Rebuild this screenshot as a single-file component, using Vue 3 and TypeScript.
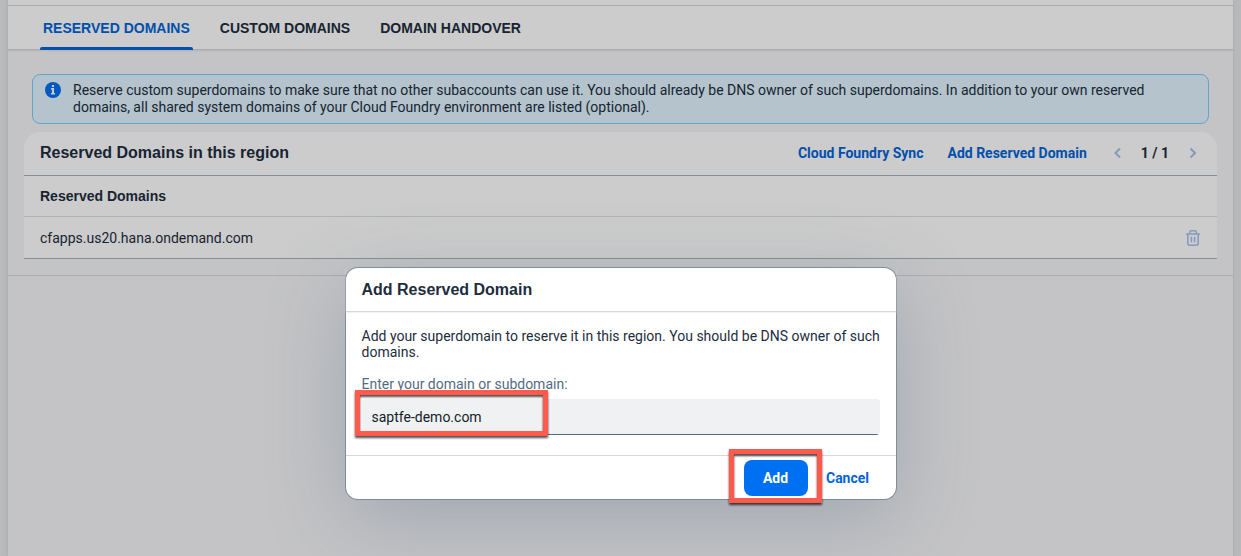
<script setup lang="ts">
import { ref } from 'vue'

interface Tab {
  id: string
  label: string
}

const tabs: Tab[] = [
  { id: 'reserved', label: 'RESERVED DOMAINS' },
  { id: 'custom', label: 'CUSTOM DOMAINS' },
  { id: 'handover', label: 'DOMAIN HANDOVER' },
]
const activeTab = ref('reserved')
const domains = ref<string[]>(['cfapps.us20.hana.ondemand.com'])
const newDomain = ref('saptfe-demo.com')
</script>

<template>
  <div class="shell">
    <div class="page">
      <div class="page-top"></div>
      <nav class="tabs" role="tablist">
        <button
          v-for="tab in tabs"
          :key="tab.id"
          type="button"
          role="tab"
          class="tab"
          :class="{ active: tab.id === activeTab }"
          :aria-selected="tab.id === activeTab"
          @click="activeTab = tab.id"
        >{{ tab.label }}</button>
      </nav>
      <main class="content">
        <div class="message">
          <svg class="info-icon" viewBox="0 0 16 16" width="16" height="16" aria-hidden="true">
            <circle cx="8" cy="8" r="8" fill="#0070f2" />
            <rect x="7" y="3" width="2" height="2" fill="#fff" />
            <path d="M6 6h3v5h1v1.500H6V11h1V7.500H6z" fill="#fff" />
          </svg>
          <p>Reserve custom superdomains to make sure that no other subaccounts can use it. You should already be DNS owner of such superdomains. In addition to your own reserved domains, all shared system domains of your Cloud Foundry environment are listed (optional).</p>
        </div>
        <section class="card">
          <header class="toolbar">
            <h2>Reserved Domains in this region</h2>
            <button type="button" class="link-button">Cloud Foundry Sync</button>
            <button type="button" class="link-button">Add Reserved Domain</button>
            <div class="pager">
              <button type="button" class="icon-button" aria-label="Previous page" disabled>
                <svg viewBox="0 0 16 16" width="16" height="16"><path d="M11 3.500L6.500 8l4.500 4.500" /></svg>
              </button>
              <span class="page-count">1 / 1</span>
              <button type="button" class="icon-button" aria-label="Next page" disabled>
                <svg viewBox="0 0 16 16" width="16" height="16"><path d="M5.500 3.500L10 8l-4.500 4.500" /></svg>
              </button>
            </div>
          </header>
          <table>
            <thead>
              <tr><th scope="col">Reserved Domains</th><td></td></tr>
            </thead>
            <tbody>
              <tr v-for="domain in domains" :key="domain">
                <td>{{ domain }}</td>
                <td class="action">
                  <button type="button" class="icon-button" :aria-label="`Delete ${domain}`" disabled>
                    <svg class="trash" viewBox="0 0 16 16" width="16" height="16">
                      <path d="M1 4h14M4.700 4V2.200Q4.700 .8 6.100 .8h3.800q1.400 0 1.400 1.400V4M2.800 4v9.300q0 1.900 1.900 1.900h6.600q1.900 0 1.900-1.900V4M6.400 6.700v5.600M9.600 6.700v5.600" />
                    </svg>
                  </button>
                </td>
              </tr>
            </tbody>
          </table>
        </section>
      </main>
    </div>

    <div class="backdrop"></div>
    <form class="dialog" role="dialog" aria-labelledby="dialog-title" @submit.prevent>
      <h1 id="dialog-title">Add Reserved Domain</h1>
      <div class="dialog-body">
        <p>Add your superdomain to reserve it in this region. You should be DNS owner of such domains.</p>
        <label for="domain-input">Enter your domain or subdomain:</label>
        <div class="field">
          <input id="domain-input" v-model="newDomain" type="text" />
          <span class="marker field-marker"></span>
        </div>
      </div>
      <footer>
        <div class="add-wrap">
          <button type="submit" class="button primary">Add</button>
          <span class="marker add-marker"></span>
        </div>
        <button type="button" class="button">Cancel</button>
      </footer>
    </form>
  </div>
</template>

<style>
html {
  background: #f5f6f7;
}
body {
  margin: 0;
}
</style>

<style scoped>
* {
  box-sizing: border-box;
}
.shell {
  position: relative;
  min-height: 100vh;
  padding: 0 8px;
  background: linear-gradient(to right, #eaebed, #e4e5e8 8px, #e4e5e8 calc(100% - 8px), #e7e8ea);
  color: #1d2d3e;
  font: 14px/16px Roboto, "Liberation Sans", sans-serif;
}
button,
input {
  font: inherit;
  color: inherit;
  margin: 0;
}
button {
  border: 0;
  background: none;
  cursor: pointer;
}
h1,
h2,
p {
  margin: 0;
}
.page {
  min-height: 100vh;
  background: #f5f6f8;
  box-shadow: 0 0 2px #c8ccd0;
}
.page-top {
  height: 6px;
  background: #fff;
  border-bottom: 1px solid #d9d9d9;
}
.tabs {
  display: flex;
  gap: 24px;
  height: 44px;
  padding: 0 32px;
  background: #fff;
  border-bottom: 1px solid #d5d6d8;
  box-shadow: 0 1px 2px #dfe1e4;
}
.tab,
h1,
h2,
th {
  font-family: "Liberation Sans", Arial, sans-serif;
  font-weight: 700;
}
.tab {
  position: relative;
  padding: 0 3px;
}
.tab.active {
  color: #0064d9;
}
.tab.active::after {
  content: "";
  position: absolute;
  left: 0;
  right: 0;
  bottom: -1px;
  height: 3px;
  border-radius: 2px 2px 0 0;
  background: #0064d9;
}
.content {
  padding: 24px 16px 16px;
  border-bottom: 1px solid #d9d9d9;
}
.message {
  display: flex;
  gap: 12px;
  margin: 0 8px 8px;
  padding: 7px 40px 7px 12px;
  border: 1px solid #7bcfff;
  border-radius: 8px;
  background: #e1f4ff;
  line-height: 17px;
}
.info-icon {
  flex: none;
}
.card {
  border-radius: 16px 16px 0 0;
  background: #fff;
}
.toolbar {
  display: flex;
  align-items: center;
  height: 44px;
  padding: 0 16px 2px;
  border-bottom: 1px solid #a8b2bd;
}
h2 {
  margin-right: auto;
  font-size: 16px;
  line-height: 20px;
}
.link-button {
  margin-right: 4px;
  padding: 0 10px;
  color: #0064d9;
  font-weight: 700;
}
.pager {
  display: flex;
  align-items: center;
  gap: 16px;
  margin-left: 8px;
}
.page-count {
  font-weight: 700;
}
.icon-button {
  display: flex;
  padding: 0;
}
.icon-button svg {
  fill: none;
  stroke: #a6c1ee;
  stroke-width: 2;
}
.icon-button .trash {
  stroke-width: 1.5;
}
table {
  width: 100%;
  border-collapse: collapse;
}
th,
td {
  height: 42px;
  padding: 2px 16px 0;
  text-align: left;
  border-bottom: 1px solid #a8b2bd;
}
thead th,
thead td {
  height: 40px;
  padding-top: 0;
  border-bottom-color: #dfdfdf;
}
.action {
  width: 48px;
}
.backdrop {
  position: absolute;
  inset: 0;
  background: rgba(0, 0, 0, 0.2);
}
.dialog {
  position: absolute;
  top: 268px;
  left: calc(50% - 275px);
  width: 550px;
  border-radius: 12px;
  background: #fff;
  box-shadow: 0 0 0 1px rgba(85, 107, 130, 0.56), 0 20px 80px rgba(85, 107, 130, 0.32);
}
h1 {
  padding: 12px 16px 11px;
  border-bottom: 1px solid #d9d9d9;
  box-shadow: 0 1px 1px #f2f2f2;
  font-size: 16px;
  line-height: 20px;
}
.dialog-body {
  padding: 16px 16px 20px;
}
.dialog-body p {
  margin-right: -8px;
}
label {
  display: block;
  margin: 16px 0 7px;
  color: #556b82;
}
.field {
  position: relative;
}
input {
  display: block;
  width: 100%;
  height: 36px;
  padding: 0 10px;
  border: 0;
  border-radius: 4px;
  outline: 0;
  background: linear-gradient(#556b82, #556b82) center bottom / calc(100% - 4px) 1px no-repeat #eff1f2;
  color: #131e29;
}
footer {
  display: flex;
  justify-content: flex-end;
  gap: 8px;
  padding: 4px 16px 3px;
  border-top: 1px solid #d9d9d9;
}
.button {
  min-width: 64px;
  height: 36px;
  padding: 0 10px;
  border-radius: 8px;
  color: #0064d9;
  font-weight: 700;
}
.button.primary {
  background: #0070f2;
  color: #fff;
}
.add-wrap {
  position: relative;
}
.marker {
  position: absolute;
  border: 5px solid #ff5a4c;
  filter: drop-shadow(0 2px 1px rgba(0, 0, 0, 0.7));
  pointer-events: none;
}
.field-marker {
  top: -9px;
  left: -7px;
  width: 193px;
  height: 46px;
}
.add-marker {
  inset: -11px -14px -7px -15px;
}
</style>
